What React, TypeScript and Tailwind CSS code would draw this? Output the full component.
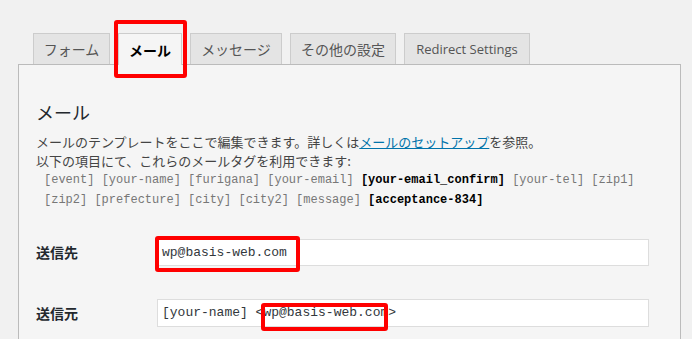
import React from "react";

const jp = { fontFamily: '"Noto Sans CJK JP", "Noto Sans", sans-serif' };
const mono = { fontFamily: '"Liberation Mono", "DejaVu Sans Mono", monospace' };

function Tab({ label, width, active, latin }: { label: string; width: string; active?: boolean; latin?: boolean }) {
  return (
    <div
      className={`${width} h-[31px] flex items-center justify-center border border-[#cccccc] border-b-0 text-[14px] leading-none ${
        active ? "bg-[#f5f5f5] text-black font-bold h-[32px] -mb-px relative z-10" : "bg-[#e4e4e4] text-[#555555]"
      }`}
      style={latin ? { fontFamily: '"Open Sans", "Noto Sans", sans-serif', fontSize: 13 } : jp}
    >
      {label}
    </div>
  );
}

const Tag = ({ t, used }: { t: string; used?: boolean }) => (
  <span className={used ? "text-black font-bold" : "text-[#777777]"}>{t}</span>
);

export default function App() {
  return (
    <div className="w-[692px] h-[339px] overflow-hidden bg-[#f1f1f1] pl-[18px] pt-[33px]" style={jp}>
      <div className="flex gap-2 pl-[15px] items-end h-[31px]">
        <Tab label="フォーム" width="w-[77px]" />
        <div className="relative">
          <Tab label="メール" width="w-[64px]" active />
          <div className="absolute left-[-4px] top-[-13px] w-[73px] h-[58px] border-4 border-[#ff0000] rounded-[3px] z-20" />
        </div>
        <Tab label="メッセージ" width="w-[92px]" />
        <Tab label="その他の設定" width="w-[106px]" />
        <Tab label="Redirect Settings" width="w-[126px]" latin />
      </div>
      <div className="w-[663px] h-[300px] border border-[#bbbbbb] border-b-0 bg-[#f5f5f5] pl-[17px] pt-[35px]">
        <h2 className="text-[18px] leading-[24px] text-[#23282d]">メール</h2>
        <p className="mt-[8px] text-[13px] leading-[19px] text-[#444444]">
          メールのテンプレートをここで編集できます。詳しくは
          <span className="text-[#0073aa] underline">メールのセットアップ</span>
          を参照。
          <br />
          以下の項目にて、これらのメールタグを利用できます:
        </p>
        <div className="pl-2 text-[12px] leading-[20px] whitespace-pre" style={mono}>
          <div>
            <Tag t="[event]" /> <Tag t="[your-name]" /> <Tag t="[furigana]" /> <Tag t="[your-email]" />{" "}
            <Tag t="[your-email_confirm]" used /> <Tag t="[your-tel]" /> <Tag t="[zip1]" />
          </div>
          <div>
            <Tag t="[zip2]" /> <Tag t="[prefecture]" /> <Tag t="[city]" /> <Tag t="[city2]" /> <Tag t="[message]" />{" "}
            <Tag t="[acceptance-834]" used />
          </div>
        </div>
        <div className="mt-[29px] flex items-center">
          <div className="w-[121px] text-[14px] font-bold text-[#23282d]">送信先</div>
          <div className="relative w-[492px] h-[27px] bg-white border border-[#dddddd] pl-[4px] flex items-center text-[13px] text-[#32373c]" style={mono}>
            wp@basis-web.com
            <div className="absolute left-[-3px] top-[-4px] w-[145px] h-[36px] border-4 border-[#ff0000] rounded-[3px]" />
          </div>
        </div>
        <div className="mt-[33px] flex items-center">
          <div className="w-[121px] text-[14px] font-bold text-[#23282d]">送信元</div>
          <div className="relative w-[492px] h-[28px] bg-white border border-[#dddddd] pl-[4px] flex items-center text-[13px] text-[#32373c] whitespace-pre" style={mono}>
            {"[your-name] <wp@basis-web.com>"}
            <div className="absolute left-[103px] top-[3px] w-[127px] h-[28px] border-4 border-[#ff0000] rounded-[3px]" />
          </div>
        </div>
      </div>
    </div>
  );
}
